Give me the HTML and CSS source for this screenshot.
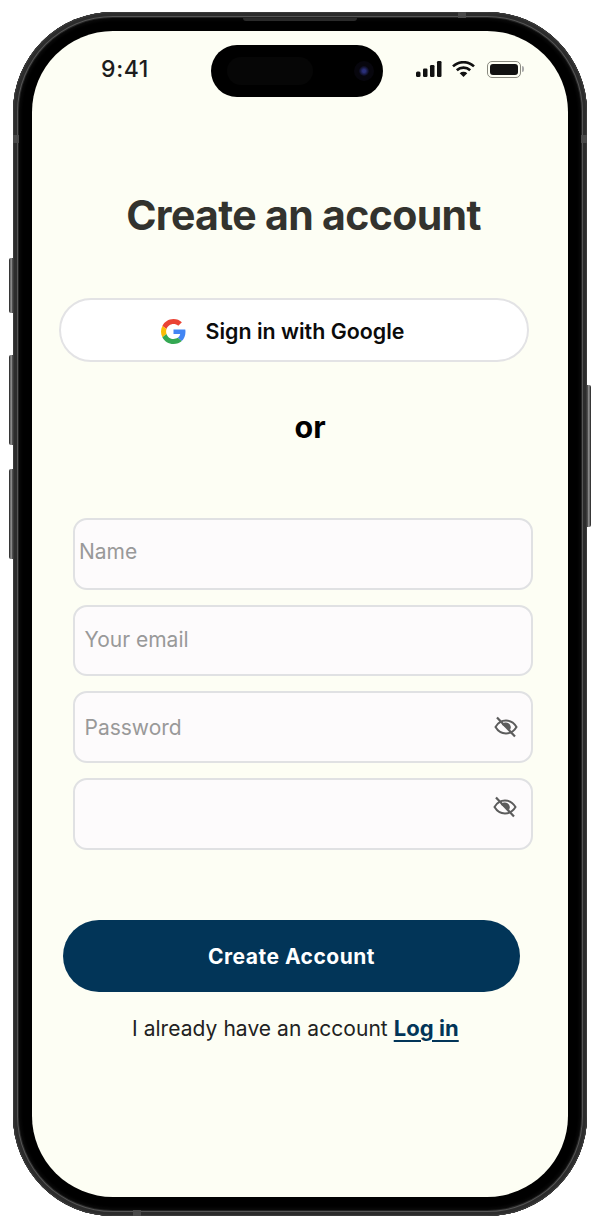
FILE: index.html
```html
<!DOCTYPE html>
<html lang="en">

<head>
  <meta charset="UTF-8">
  <meta name="viewport" content="width=device-width, initial-scale=1.0">
  <title>Create an account</title>
  <link rel="stylesheet" href="styles.css">
</head>

<body>
  <div class="phone">
    <!-- side buttons and antenna bands -->
    <span class="side-btn mute"></span>
    <span class="side-btn vol-up"></span>
    <span class="side-btn vol-down"></span>
    <span class="side-btn power"></span>
    <span class="band band-top"></span>
    <span class="band band-left"></span>
    <span class="band band-right"></span>
    <span class="band band-bottom"></span>
    <span class="speaker"></span>

    <main class="screen">
      <div class="status-bar">
        <span class="time">9:41</span>
        <div class="island">
          <span class="island-sensor"></span>
          <span class="island-camera"></span>
        </div>
        <div class="status-icons">
          <svg width="26" height="16" viewBox="0 0 26 16">
            <rect x="0" y="10.5" width="4.5" height="5.5" rx="1.5" fill="#111" />
            <rect x="7" y="7.5" width="4.5" height="8.5" rx="1.2" fill="#111" />
            <rect x="14" y="4" width="4.5" height="12" rx="1.2" fill="#111" />
            <rect x="21" y="0" width="4.5" height="16" rx="1.2" fill="#111" />
          </svg>
          <svg width="23" height="16" viewBox="0 0 23 16">
            <path d="M1 5.400a15.200 15.200 0 0 1 21 0" fill="none" stroke="#111" stroke-width="2.600" />
            <path d="M4.800 9.300a9.800 9.800 0 0 1 13.400 0" fill="none" stroke="#111" stroke-width="2.600" />
            <path d="M7.700 12.300l3.800 3.700 3.800-3.700a5.600 5.600 0 0 0-7.600 0z" fill="#111" />
          </svg>
          <div class="battery"><span class="battery-level"></span></div>
        </div>
      </div>

      <h1 class="title">Create an account</h1>

      <button class="google-btn" type="button">
        <svg width="25" height="25" viewBox="0 0 48 48">
          <path fill="#EA4335" d="M24 9.500c3.500 0 6.700 1.200 9.200 3.600l6.900-6.900C35.900 2.400 30.500 0 24 0 14.600 0 6.500 5.400 2.600 13.200l8 6.200C12.500 13.700 17.800 9.500 24 9.500z" />
          <path fill="#4285F4" d="M47 24.500c0-1.600-.1-3.100-.4-4.500H24v9h12.900c-.6 3-2.200 5.500-4.700 7.200l7.700 6c4.500-4.200 7.100-10.300 7.100-17.700z" />
          <path fill="#FBBC05" d="M10.600 28.600c-.5-1.500-.8-3-.8-4.600s.3-3.100.8-4.600l-8-6.200C.9 16.500 0 20.100 0 24s.9 7.500 2.600 10.800l8-6.200z" />
          <path fill="#34A853" d="M24 48c6.500 0 11.900-2.100 15.900-5.800l-7.700-6c-2.200 1.400-4.900 2.300-8.200 2.300-6.200 0-11.500-4.200-13.400-9.900l-8 6.200C6.500 42.600 14.600 48 24 48z" />
        </svg>
        <span>Sign in with Google</span>
      </button>

      <p class="or">or</p>

      <form class="fields">
        <div class="field field-name"><span class="placeholder">Name</span></div>
        <div class="field field-email"><span class="placeholder">Your email</span></div>
        <div class="field">
          <span class="placeholder">Password</span>
          <svg class="eye" width="24" height="24" viewBox="0 0 24 24">
            <path d="M1.500 12C4 7.800 7.700 5.600 12 5.600s8 2.200 10.500 6.400C20 16.200 16.300 18.400 12 18.400S4 16.200 1.500 12z" fill="none" stroke="#5c5c5c" stroke-width="2" />
            <path d="M7.800 9.700a4.700 4.700 0 0 1 8.200 5.200z" fill="#5c5c5c" />
            <path d="M3 2.500l18 19" stroke="#5c5c5c" stroke-width="2.200" />
          </svg>
        </div>
        <div class="field field-confirm">
          <svg class="eye" width="24" height="24" viewBox="0 0 24 24">
            <path d="M1.500 12C4 7.800 7.700 5.600 12 5.600s8 2.200 10.500 6.400C20 16.200 16.300 18.400 12 18.400S4 16.200 1.500 12z" fill="none" stroke="#5c5c5c" stroke-width="2" />
            <path d="M7.800 9.700a4.700 4.700 0 0 1 8.200 5.200z" fill="#5c5c5c" />
            <path d="M3 2.500l18 19" stroke="#5c5c5c" stroke-width="2.200" />
          </svg>
        </div>
      </form>

      <button class="create-btn" type="button">Create Account</button>

      <p class="login">I already have an account <a href="#">Log in</a></p>
    </main>
  </div>
</body>

</html>
```

FILE: styles.css
```css
* {
  margin: 0;
  padding: 0;
  box-sizing: border-box;
}

body {
  background: #fff;
  font-family: Inter, "Liberation Sans", sans-serif;
}

/* Phone frame */
.phone {
  position: relative;
  width: 574px;
  height: 1204px;
  margin: 12px 0 0 13px;
  padding: 19px;
  border-radius: 100px;
  background: #000;
  box-shadow:
    inset 0 0 0 1px #3a3a3a,
    inset 0 0 0 4px #2c2c2c,
    inset 0 0 0 5px #555,
    inset 0 0 0 6px #222,
    inset 0 0 3px 8px #0a0a0a;
}

.side-btn {
  position: absolute;
  width: 4px;
  background: linear-gradient(90deg, #1a1a1a, #999 55%, #333);
  border-radius: 2px 0 0 2px;
}

.mute { left: -4px; top: 246px; height: 55px; }
.vol-up { left: -4px; top: 343px; height: 90px; }
.vol-down { left: -4px; top: 457px; height: 90px; }

.power {
  right: -4px;
  top: 373px;
  height: 142px;
  border-radius: 0 2px 2px 0;
  background: linear-gradient(270deg, #1a1a1a, #999 55%, #333);
}

.band {
  position: absolute;
  background: #4a4a4a;
}

.band-top { left: 445px; top: 0; width: 8px; height: 6px; }
.band-left { left: 0; top: 123px; width: 6px; height: 8px; }
.band-right { right: 0; top: 123px; width: 6px; height: 8px; }
.band-bottom { left: 120px; bottom: 0; width: 8px; height: 6px; }

.speaker {
  position: absolute;
  left: 230px;
  top: 6px;
  width: 114px;
  height: 3px;
  background: #2a2a2a;
  border-radius: 0 0 3px 3px;
}

.screen {
  width: 536px;
  height: 1166px;
  border-radius: 81px;
  background: #fdfef4;
  overflow: hidden;
}

/* Status bar */
.status-bar {
  display: grid;
  grid-template-columns: 179px 172px 1fr;
  align-items: center;
  padding-top: 14px;
}

.time {
  margin-bottom: 4px;
  padding-left: 7px;
  text-align: center;
  font-size: 23px;
  font-weight: 500;
  letter-spacing: 0.6px;
  color: #1c1c1c;
}

.island {
  display: flex;
  align-items: center;
  justify-content: space-between;
  height: 52px;
  padding: 0 14px 0 16px;
  border-radius: 26px;
  background: #000;
}

.island-sensor {
  width: 86px;
  height: 28px;
  border-radius: 14px;
  background: #060606;
}

.island-camera {
  width: 10px;
  height: 10px;
  border-radius: 50%;
  background: radial-gradient(circle, #2a2f7a 20%, #10102a 60%, #08080f);
  box-shadow: 0 0 0 5px #07060d;
}

.status-icons {
  display: flex;
  align-items: center;
  justify-content: flex-end;
  gap: 10px;
  margin-bottom: 4px;
  padding-right: 47px;
}

.battery {
  position: relative;
  width: 34px;
  height: 17px;
  padding: 2px;
  margin-left: 2px;
  border: 1px solid #8a8a80;
  border-radius: 5px;
}

.battery::after {
  content: "";
  position: absolute;
  right: -4px;
  top: 4px;
  width: 2px;
  height: 6px;
  border-radius: 0 2px 2px 0;
  background: #aaa;
}

.battery-level {
  display: block;
  height: 100%;
  border-radius: 3px;
  background: #111;
}

/* Form content */
.title {
  margin-top: 94px;
  padding-left: 7px;
  text-align: center;
  font-size: 41px;
  line-height: 48px;
  font-weight: 700;
  letter-spacing: -0.65px;
  color: #33332e;
}

.google-btn {
  display: flex;
  align-items: center;
  justify-content: center;
  gap: 20px;
  width: 470px;
  height: 64px;
  margin: 59px 0 0 27px;
  padding: 2px 23px 0 0;
  border: 2px solid #e3e3e5;
  border-radius: 32px;
  background: #fff;
  font: inherit;
  font-size: 21.400px;
  font-weight: 600;
  color: #0b0b0b;
}

.or {
  margin-top: 45px;
  padding-left: 20px;
  text-align: center;
  font-size: 30.500px;
  line-height: 40px;
  font-weight: 700;
  color: #000;
}

.fields {
  display: flex;
  flex-direction: column;
  gap: 15px;
  width: 460px;
  margin: 71px 0 0 41px;
}

.field {
  display: flex;
  align-items: center;
  justify-content: space-between;
  height: 71.700px;
  padding: 0 13px 0 9.500px;
  border: 2px solid #e0e1e3;
  border-radius: 14px;
  background: #fdfbfc;
}

.field-name {
  padding: 0 0 4px 4px;
}

.field-email {
  padding-bottom: 2px;
}

.field-confirm {
  align-items: flex-start;
  justify-content: flex-end;
  padding: 15px 14px 0 0;
}

.placeholder {
  font-size: 21px;
  color: #999;
}

.create-btn {
  display: block;
  width: 457px;
  height: 72px;
  margin: 70.200px 0 0 31px;
  padding-top: 2px;
  border: none;
  border-radius: 36px;
  background: #023558;
  font: inherit;
  font-size: 21px;
  font-weight: 700;
  letter-spacing: 0.5px;
  color: #fff;
}

.login {
  margin: 21px 0 0 100px;
  font-size: 21px;
  line-height: 30px;
  letter-spacing: 0.05px;
  color: #222;
}

.login a {
  font-size: 22px;
  font-weight: 700;
  color: #023558;
  text-decoration: underline;
  text-decoration-thickness: 2px;
  text-underline-offset: 4px;
}
```
